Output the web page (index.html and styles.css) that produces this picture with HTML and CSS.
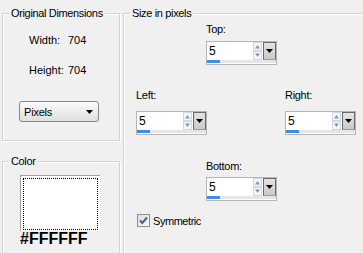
FILE: index.html
```html
<!DOCTYPE html>
<html>
<head>
    <title>Borders</title>
    <link rel="stylesheet" href="styles.css">
</head>
<body>
    <div class="dialog">
        <div class="left-col">
            <fieldset class="group dims">
                <legend>Original Dimensions</legend>
                <div class="dims-body">
                    <div class="info"><span class="info-label">Width:</span><span>704</span></div>
                    <div class="info"><span class="info-label">Height:</span><span>704</span></div>
                    <div class="select">
                        <span>Pixels</span>
                        <svg width="7" height="4" viewBox="0 0 7 4"><path d="M0 0h7L3.5 4z" fill="#000"/></svg>
                    </div>
                </div>
            </fieldset>

            <fieldset class="group color">
                <legend>Color</legend>
                <div class="color-body">
                    <div class="swatch"><div class="swatch-focus"></div></div>
                    <div class="hex">#FFFFFF</div>
                </div>
            </fieldset>
        </div>

        <fieldset class="group size">
            <legend>Size in pixels</legend>
            <div class="size-body">
                <div class="field field-top">
                    <div class="field-label">Top:</div>
                    <div class="spin">
                        <div class="spin-row">
                            <span class="spin-value">5</span>
                            <span class="spin-arrows">
                                <svg width="9" height="18" viewBox="0 0 9 18"><rect x="0.5" y="0.5" width="8" height="8" fill="#f4f6f9" stroke="#d3d8e0"/><rect x="0.5" y="9.5" width="8" height="8" fill="#f4f6f9" stroke="#d3d8e0"/><path d="M2 6.5L4.5 3L7 6.5z" fill="#8796b3"/><path d="M2 11.5L4.5 15L7 11.5z" fill="#8796b3"/></svg>
                            </span>
                            <span class="spin-drop"><svg width="7" height="4" viewBox="0 0 7 4"><path d="M0 0h7L3.5 4z" fill="#000"/></svg></span>
                        </div>
                        <div class="spin-bar"><div class="spin-fill"></div></div>
                    </div>
                </div>

                <div class="sides">
                    <div class="field">
                        <div class="field-label">Left:</div>
                        <div class="spin">
                            <div class="spin-row">
                                <span class="spin-value">5</span>
                                <span class="spin-arrows">
                                    <svg width="9" height="18" viewBox="0 0 9 18"><rect x="0.5" y="0.5" width="8" height="8" fill="#f4f6f9" stroke="#d3d8e0"/><rect x="0.5" y="9.5" width="8" height="8" fill="#f4f6f9" stroke="#d3d8e0"/><path d="M2 6.5L4.5 3L7 6.5z" fill="#8796b3"/><path d="M2 11.5L4.5 15L7 11.5z" fill="#8796b3"/></svg>
                                </span>
                                <span class="spin-drop"><svg width="7" height="4" viewBox="0 0 7 4"><path d="M0 0h7L3.5 4z" fill="#000"/></svg></span>
                            </div>
                            <div class="spin-bar"><div class="spin-fill"></div></div>
                        </div>
                    </div>
                    <div class="field">
                        <div class="field-label">Right:</div>
                        <div class="spin">
                            <div class="spin-row">
                                <span class="spin-value">5</span>
                                <span class="spin-arrows">
                                    <svg width="9" height="18" viewBox="0 0 9 18"><rect x="0.5" y="0.5" width="8" height="8" fill="#f4f6f9" stroke="#d3d8e0"/><rect x="0.5" y="9.5" width="8" height="8" fill="#f4f6f9" stroke="#d3d8e0"/><path d="M2 6.5L4.5 3L7 6.5z" fill="#8796b3"/><path d="M2 11.5L4.5 15L7 11.5z" fill="#8796b3"/></svg>
                                </span>
                                <span class="spin-drop"><svg width="7" height="4" viewBox="0 0 7 4"><path d="M0 0h7L3.5 4z" fill="#000"/></svg></span>
                            </div>
                            <div class="spin-bar"><div class="spin-fill"></div></div>
                        </div>
                    </div>
                </div>

                <div class="field field-bottom">
                    <div class="field-label">Bottom:</div>
                    <div class="spin">
                        <div class="spin-row">
                            <span class="spin-value">5</span>
                            <span class="spin-arrows">
                                <svg width="9" height="18" viewBox="0 0 9 18"><rect x="0.5" y="0.5" width="8" height="8" fill="#f4f6f9" stroke="#d3d8e0"/><rect x="0.5" y="9.5" width="8" height="8" fill="#f4f6f9" stroke="#d3d8e0"/><path d="M2 6.5L4.5 3L7 6.5z" fill="#8796b3"/><path d="M2 11.5L4.5 15L7 11.5z" fill="#8796b3"/></svg>
                            </span>
                            <span class="spin-drop"><svg width="7" height="4" viewBox="0 0 7 4"><path d="M0 0h7L3.5 4z" fill="#000"/></svg></span>
                        </div>
                        <div class="spin-bar"><div class="spin-fill"></div></div>
                    </div>
                </div>

                <div class="check">
                    <svg width="13" height="13" viewBox="0 0 13 13">
                        <defs><linearGradient id="cb" x1="0" y1="0" x2="1" y2="1"><stop offset="0" stop-color="#dcdcdc"/><stop offset="1" stop-color="#fbfbfb"/></linearGradient></defs>
                        <rect x="0.5" y="0.5" width="12" height="12" fill="url(#cb)" stroke="#8e8f8f"/>
                        <path d="M3 6.5L5.3 9L10 3.5" fill="none" stroke="#4a5c99" stroke-width="2"/>
                    </svg>
                    <span>Symmetric</span>
                </div>
            </div>
        </fieldset>
    </div>
</body>
</html>
```

FILE: styles.css
```css
body {
    margin: 0;
    background: #f0f0f0;
    font-family: "Liberation Sans", Arial, sans-serif;
    font-size: 11px;
    color: #000;
    overflow: hidden;
}

.dialog {
    display: flex;
    align-items: flex-start;
    width: max-content;
    padding-left: 2px;
}

.left-col {
    width: 118px;
    flex-shrink: 0;
    margin-right: 3px;
}

.group {
    margin: 6px 0 0;
    padding: 0;
    border: 1px solid #d3d3d3;
    box-shadow: inset 1px 1px #fff, 1px 1px #fff;
    min-width: 0;
}

.group legend {
    margin-left: 6px;
    padding: 0 2px;
    line-height: 14px;
    letter-spacing: -0.35px;
    background: #f0f0f0;
}

/* original dimensions */
.dims-body {
    padding: 14px 0 18px 16px;
}

.info {
    display: flex;
    margin-left: 10px;
    line-height: 13px;
    margin-bottom: 17px;
}

.info-label {
    width: 39px;
}

.select {
    display: flex;
    align-items: center;
    justify-content: space-between;
    width: 80px;
    height: 21px;
    margin-top: 24px;
    padding: 0 5px 0 4px;
    box-sizing: border-box;
    border: 1px solid #878787;
    border-radius: 3px;
    background: linear-gradient(#fcfcfc, #dedede);
    letter-spacing: -0.2px;
}

/* color */
.color {
    margin-top: 13px;
    height: 110px;
}

.color-body {
    padding: 7px 0 0 17px;
}

.swatch {
    width: 80px;
    height: 56px;
    box-sizing: border-box;
    border-top: 1px solid #a0a0a0;
    border-left: 1px solid #a0a0a0;
    background: #fff;
    padding: 2px 2px 1px 2px;
}

.swatch-focus {
    height: 100%;
    border: 1px dotted #000;
    box-sizing: border-box;
}

.hex {
    font-size: 16px;
    font-weight: bold;
    line-height: 16px;
}

/* size in pixels */
.size {
    width: 250px;
    height: 270px;
    flex-shrink: 0;
}

.size-body {
    width: 220px;
    padding: 3px 0 0 12px;
}

.field-label {
    line-height: 13px;
    letter-spacing: -0.3px;
}

.field-top,
.field-bottom {
    padding-left: 70px;
}

.field-top .field-label,
.field-bottom .field-label {
    margin-bottom: 4px;
}

.field-top .field-label {
    margin-bottom: 5px;
}

.sides {
    display: flex;
    justify-content: space-between;
    margin-top: 24px;
}

.sides .field-label {
    margin-bottom: 9px;
}

.field-bottom {
    margin-top: 25px;
}

.spin {
    width: 71px;
    box-sizing: border-box;
    border: 1px solid #b5b5b5;
    background: #fff;
}

.spin-row {
    display: flex;
    height: 18px;
}

.spin-value {
    flex: 1;
    font-size: 12px;
    line-height: 18px;
    padding-left: 2px;
}

.spin-arrows {
    width: 9px;
    display: flex;
}

.spin-drop {
    width: 13px;
    margin-left: 1px;
    box-sizing: border-box;
    border: 1px solid #6a6a6a;
    border-bottom-color: #9a9a9a;
    background: linear-gradient(#e4e4e4, #c9c9c9);
    display: flex;
    align-items: center;
    justify-content: center;
}

.spin-bar {
    height: 3px;
    margin-bottom: 1px;
    background: #e6e6e6;
}

.spin-fill {
    width: 13px;
    height: 100%;
    background: #3a8fe8;
}

.check {
    display: flex;
    align-items: center;
    margin: 13px 0 0 1px;
    gap: 3px;
    letter-spacing: -0.45px;
}

.check svg {
    display: block;
}
```
